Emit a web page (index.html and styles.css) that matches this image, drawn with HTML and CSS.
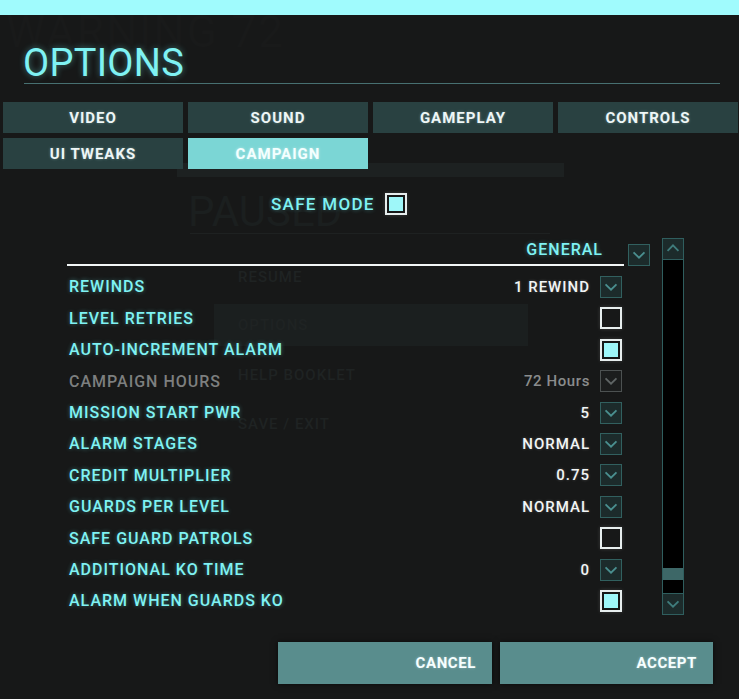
FILE: index.html
```html
<!DOCTYPE html>
<html lang="en">
<head>
<meta charset="utf-8">
<title>Options</title>
<link rel="stylesheet" href="styles.css">
</head>
<body>
<div class="screen">
  <div class="topbar"></div>

  <div class="backdrop" aria-hidden="true">
    <div class="bg-warning">WARNING 72</div>
    <div class="bg-strip"></div>
    <div class="bg-paused">PAUSED</div>
    <div class="bg-rule"></div>
    <div class="bg-item bg-resume">RESUME</div>
    <div class="bg-item bg-options">OPTIONS</div>
    <div class="bg-item bg-help">HELP BOOKLET</div>
    <div class="bg-item bg-save">SAVE / EXIT</div>
  </div>

  <div class="dialog">
    <h1 class="title">OPTIONS</h1>

    <nav class="tabs">
      <div class="tab">VIDEO</div>
      <div class="tab">SOUND</div>
      <div class="tab">GAMEPLAY</div>
      <div class="tab">CONTROLS</div>
      <div class="tab">UI TWEAKS</div>
      <div class="tab active">CAMPAIGN</div>
    </nav>

    <div class="safe">
      <span class="safe-label">SAFE MODE</span>
      <span class="check on"></span>
    </div>

    <div class="settings">
      <div class="list">
        <div class="list-head">
          <div class="head-label">GENERAL</div>
          <span class="dd"><svg viewBox="0 0 22 22"><path d="M5 8 L11 14 L17 8"/></svg></span>
        </div>

        <div class="row"><span class="label">REWINDS</span><span class="value">1 REWIND</span><span class="dd"><svg viewBox="0 0 22 22"><path d="M5 8 L11 14 L17 8"/></svg></span></div>
        <div class="row"><span class="label">LEVEL RETRIES</span><span class="check"></span></div>
        <div class="row"><span class="label">AUTO-INCREMENT ALARM</span><span class="check on"></span></div>
        <div class="row disabled"><span class="label">CAMPAIGN HOURS</span><span class="value">72 Hours</span><span class="dd"><svg viewBox="0 0 22 22"><path d="M5 8 L11 14 L17 8"/></svg></span></div>
        <div class="row"><span class="label">MISSION START PWR</span><span class="value">5</span><span class="dd"><svg viewBox="0 0 22 22"><path d="M5 8 L11 14 L17 8"/></svg></span></div>
        <div class="row"><span class="label">ALARM STAGES</span><span class="value">NORMAL</span><span class="dd"><svg viewBox="0 0 22 22"><path d="M5 8 L11 14 L17 8"/></svg></span></div>
        <div class="row"><span class="label">CREDIT MULTIPLIER</span><span class="value">0.75</span><span class="dd"><svg viewBox="0 0 22 22"><path d="M5 8 L11 14 L17 8"/></svg></span></div>
        <div class="row"><span class="label">GUARDS PER LEVEL</span><span class="value">NORMAL</span><span class="dd"><svg viewBox="0 0 22 22"><path d="M5 8 L11 14 L17 8"/></svg></span></div>
        <div class="row"><span class="label">SAFE GUARD PATROLS</span><span class="check"></span></div>
        <div class="row"><span class="label">ADDITIONAL KO TIME</span><span class="value">0</span><span class="dd"><svg viewBox="0 0 22 22"><path d="M5 8 L11 14 L17 8"/></svg></span></div>
        <div class="row"><span class="label">ALARM WHEN GUARDS KO</span><span class="check on"></span></div>
      </div>

      <div class="scrollbar">
        <span class="sb-btn"><svg viewBox="0 0 22 22"><path d="M5 13 L11 7 L17 13"/></svg></span>
        <div class="sb-track"><div class="sb-thumb"></div></div>
        <span class="sb-btn"><svg viewBox="0 0 22 22"><path d="M5 8 L11 14 L17 8"/></svg></span>
      </div>
    </div>

    <div class="actions">
      <button class="btn cancel">CANCEL</button>
      <button class="btn accept">ACCEPT</button>
    </div>
  </div>
</div>
</body>
</html>
```

FILE: styles.css
```css
* { box-sizing: border-box; }

html, body {
  margin: 0;
  padding: 0;
  background: #171818;
}

body {
  font-family: Roboto, "Liberation Sans", sans-serif;
  width: 739px;
  height: 699px;
  overflow: hidden;
}

.screen {
  position: relative;
  width: 739px;
  height: 699px;
  background: #171818;
}

.topbar {
  height: 15px;
  background: #a0fbfd;
}

/* faint paused menu behind the dialog */
.backdrop {
  position: absolute;
  inset: 0;
  z-index: 0;
  pointer-events: none;
}
.bg-warning {
  position: absolute;
  left: 6px;
  top: 12px;
  font-size: 44px;
  line-height: 40px;
  letter-spacing: 2px;
  color: #191a1a;
}
.bg-strip {
  position: absolute;
  left: 177px;
  top: 163px;
  width: 387px;
  height: 14px;
  background: #1d2121;
}
.bg-paused {
  position: absolute;
  left: 188px;
  top: 190px;
  font-size: 42px;
  line-height: 44px;
  color: #1b1f1f;
}
.bg-rule {
  position: absolute;
  left: 190px;
  top: 233px;
  width: 360px;
  height: 1px;
  background: #1e2121;
}
.bg-item {
  position: absolute;
  left: 238px;
  font-size: 15px;
  font-weight: 500;
  letter-spacing: 1px;
  color: #1f2323;
}
.bg-resume { top: 268px; }
.bg-options {
  top: 304px;
  left: 214px;
  width: 314px;
  height: 42px;
  padding: 12px 24px;
  background: #1b1f1f;
}
.bg-help { top: 366px; }
.bg-save { top: 415px; }

.dialog {
  position: relative;
  z-index: 1;
}

.title {
  margin: 29px 19px 0 24px;
  font-size: 38px;
  font-weight: 400;
  line-height: 39px;
  letter-spacing: 0.3px;
  color: #7ff2f3;
  text-shadow: 0 0 6px rgba(110, 235, 235, 0.45);
  border-bottom: 1px solid #477071;
  text-indent: -1px;
}

.tabs {
  margin: 18px 0 0 3px;
  display: grid;
  grid-template-columns: repeat(4, 180px);
  grid-auto-rows: 31px;
  gap: 5px;
}
.tab {
  display: flex;
  align-items: center;
  justify-content: center;
  background: #294141;
  color: #eef6f6;
  font-size: 15px;
  font-weight: 700;
  letter-spacing: 1px;
  text-shadow: 0 0 3px rgba(200, 255, 255, 0.35);
}
.tab.active {
  background: #7bd6d5;
  color: #f4ffff;
  text-shadow: 0 0 3px rgba(255, 255, 255, 0.5);
}

.safe {
  margin-top: 24px;
  height: 22px;
  padding-left: 271px;
  display: flex;
  align-items: center;
  gap: 10px;
}
.safe-label {
  font-size: 17px;
  font-weight: 500;
  letter-spacing: 1.3px;
  color: #7ff2f3;
  text-shadow: 0 0 4px rgba(110, 235, 235, 0.4);
}

.check {
  width: 22px;
  height: 22px;
  flex: none;
  border: 2px solid #e6eded;
  background: #171818;
  padding: 2px;
  box-shadow: 0 0 4px rgba(255, 255, 255, 0.15);
}
.check.on::before {
  content: "";
  display: block;
  width: 100%;
  height: 100%;
  background: #9ef7f9;
}

.settings {
  margin: 23px 0 0 67px;
  display: flex;
  gap: 12px;
}

.list {
  width: 583px;
}
.list-head {
  height: 28px;
  display: flex;
  align-items: flex-end;
  gap: 4px;
}
.head-label {
  width: 557px;
  height: 28px;
  border-bottom: 2px solid #f2f6f6;
  text-align: right;
  padding-right: 21px;
  font-size: 16px;
  font-weight: 500;
  letter-spacing: 1px;
  line-height: 24px;
  color: #7ff2f3;
  text-shadow: 0 0 4px rgba(110, 235, 235, 0.4);
}

.dd {
  width: 22px;
  height: 22px;
  flex: none;
  display: block;
  background: #1c2b2b;
  border: 1px solid #31605f;
}
.dd svg {
  display: block;
  width: 20px;
  height: 20px;
}
.dd path, .sb-btn path {
  fill: none;
  stroke: #4a8f8f;
  stroke-width: 2;
}

.row {
  height: 31.4px;
  display: flex;
  align-items: center;
  padding: 0 28px 0 2px;
}
.list-head + .row { margin-top: 5.3px; }

.label {
  flex: 1;
  font-size: 16px;
  font-weight: 500;
  letter-spacing: 1px;
  color: #7ff2f3;
  text-shadow: 0 0 4px rgba(110, 235, 235, 0.4);
  white-space: nowrap;
}

.value {
  margin-right: 10px;
  font-size: 15px;
  font-weight: 500;
  letter-spacing: 1px;
  color: #f2f5f5;
  text-shadow: 0 0 3px rgba(255, 255, 255, 0.25);
}

.row.disabled .label { color: #7d7f7f; text-shadow: none; }
.row.disabled .value { color: #8a8c8c; text-shadow: none; letter-spacing: 0.6px; }
.row.disabled .dd { border-color: #4c5151; background: #1b1d1d; }
.row.disabled .dd path { stroke: #5f6565; }

.scrollbar {
  width: 22px;
  height: 377px;
  display: flex;
  flex-direction: column;
  border: 1px solid #2f5e5e;
  background: #000;
}
.sb-btn {
  height: 21px;
  flex: none;
  display: block;
  background: #1c2b2b;
}
.sb-btn:first-child { border-bottom: 1px solid #2f5e5e; }
.sb-btn:last-child { border-top: 1px solid #2f5e5e; }
.sb-btn svg {
  display: block;
  width: 20px;
  height: 20px;
}
.sb-btn path { stroke: #3f7c7c; }
.sb-track {
  flex: 1;
  display: flex;
  flex-direction: column;
  justify-content: flex-end;
  padding-bottom: 13px;
}
.sb-thumb {
  height: 12px;
  background: #3d6767;
}

.actions {
  margin-top: 25px;
  padding-left: 278px;
  display: flex;
  gap: 8px;
}
.btn {
  height: 42px;
  border: 0;
  margin: 0;
  background: #598d8d;
  color: #f6ffff;
  font-family: Roboto, "Liberation Sans", sans-serif;
  font-size: 15px;
  font-weight: 700;
  letter-spacing: 0.6px;
  text-align: right;
  padding: 0 16px 0 0;
  text-shadow: 0 0 3px rgba(255, 255, 255, 0.35);
  box-shadow: 0 0 6px rgba(0, 0, 0, 0.6);
}
.cancel { width: 214px; }
.accept { width: 213px; }
```
